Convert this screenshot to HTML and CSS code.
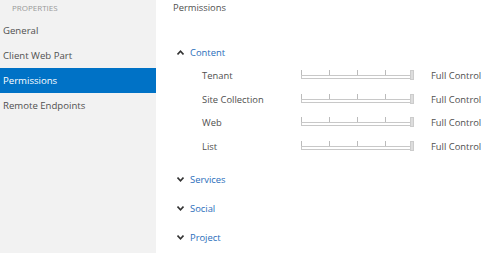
FILE: index.html
```html
<!DOCTYPE html>
<html>
<head>
<meta charset="utf-8">
<link rel="stylesheet" href="styles.css">
</head>
<body>
<div class="app">
  <nav class="sidebar">
    <div class="side-head">PROPERTIES</div>
    <div class="side-item">General</div>
    <div class="side-item">Client Web Part</div>
    <div class="side-item active">Permissions</div>
    <div class="side-item">Remote Endpoints</div>
  </nav>
  <main class="main">
    <div class="title">Permissions</div>
    <section class="group open">
      <div class="group-head"><svg class="chev" viewBox="0 0 7 5" width="7" height="5"><path d="M0.5 4.5 L3.5 1.2 L6.5 4.5" fill="none" stroke="#333" stroke-width="1.6"/></svg><span class="group-name">Content</span></div>
      <div class="rows">
        <div class="row"><span class="label">Tenant</span><span class="slider"><span class="ticks"></span><span class="track"></span><span class="thumb"></span></span><span class="value">Full Control</span></div>
        <div class="row"><span class="label">Site Collection</span><span class="slider"><span class="ticks"></span><span class="track"></span><span class="thumb"></span></span><span class="value">Full Control</span></div>
        <div class="row"><span class="label">Web</span><span class="slider"><span class="ticks"></span><span class="track"></span><span class="thumb"></span></span><span class="value">Full Control</span></div>
        <div class="row"><span class="label">List</span><span class="slider"><span class="ticks"></span><span class="track"></span><span class="thumb"></span></span><span class="value">Full Control</span></div>
      </div>
    </section>
    <section class="group closed"><div class="group-head"><svg class="chev" viewBox="0 0 7 5" width="7" height="5"><path d="M0.5 0.5 L3.5 3.8 L6.5 0.5" fill="none" stroke="#333" stroke-width="1.6"/></svg><span class="group-name">Services</span></div></section>
    <section class="group"><div class="group-head"><svg class="chev" viewBox="0 0 7 5" width="7" height="5"><path d="M0.5 0.5 L3.5 3.8 L6.5 0.5" fill="none" stroke="#333" stroke-width="1.6"/></svg><span class="group-name">Social</span></div></section>
    <section class="group"><div class="group-head"><svg class="chev" viewBox="0 0 7 5" width="7" height="5"><path d="M0.5 0.5 L3.5 3.8 L6.5 0.5" fill="none" stroke="#333" stroke-width="1.6"/></svg><span class="group-name">Project</span></div></section>
  </main>
</div>
</body>
</html>
```
FILE: styles.css
```css
html, body { margin: 0; padding: 0; background: #fff; }
body { font-family: "Open Sans", "Noto Sans", sans-serif; font-size: 9.4px; color: #505050; }
.app { display: flex; width: 491px; height: 253px; }
.sidebar { width: 156px; background: #f2f2f2; display: flex; flex-direction: column; }
.side-head { height: 18px; line-height: 15px; padding-left: 12px; font-size: 8px; color: #999; }
.side-item { height: 25px; line-height: 25px; padding-left: 3px; color: #505050; font-size: 9.6px; }
.side-item.active { background: #0072c6; color: #fff; }
.main { flex: 1; padding-left: 17px; display: flex; flex-direction: column; }
.title { height: 15px; line-height: 15px; }
.group-head { display: flex; align-items: center; height: 29px; }
.open .group-head { margin-top: 25px; height: 24px; }
.closed { margin-top: 6.5px; }
.group-name { color: #2a6ebb; }
.chev { margin-left: 4px; margin-right: 6px; flex: none; }
.rows { display: flex; flex-direction: column; }
.row { display: flex; align-items: center; height: 23.5px; padding-left: 29px; }
.label { width: 99px; }
.slider { position: relative; width: 113px; height: 11px; display: flex; flex-direction: column; }
.ticks { height: 5px; background: repeating-linear-gradient(90deg, #bbb 0 1px, transparent 1px 28px); width: 113px; }
.track { height: 2px; border: 1px solid #c8c8c8; background: #fff; }
.thumb { position: absolute; right: 0; top: 0; width: 4px; height: 10px; background: #ddd; border: 1px solid #ccc; box-sizing: border-box; }
.value { margin-left: 17px; }
```
